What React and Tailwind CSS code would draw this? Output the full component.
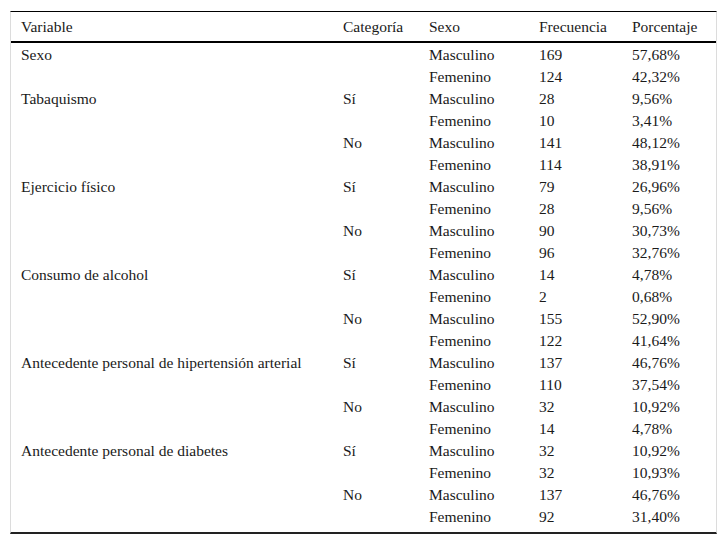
const rows = [
  ['Sexo', '', 'Masculino', '169', '57,68%'],
  ['', '', 'Femenino', '124', '42,32%'],
  ['Tabaquismo', 'Sí', 'Masculino', '28', '9,56%'],
  ['', '', 'Femenino', '10', '3,41%'],
  ['', 'No', 'Masculino', '141', '48,12%'],
  ['', '', 'Femenino', '114', '38,91%'],
  ['Ejercicio físico', 'Sí', 'Masculino', '79', '26,96%'],
  ['', '', 'Femenino', '28', '9,56%'],
  ['', 'No', 'Masculino', '90', '30,73%'],
  ['', '', 'Femenino', '96', '32,76%'],
  ['Consumo de alcohol', 'Sí', 'Masculino', '14', '4,78%'],
  ['', '', 'Femenino', '2', '0,68%'],
  ['', 'No', 'Masculino', '155', '52,90%'],
  ['', '', 'Femenino', '122', '41,64%'],
  ['Antecedente personal de hipertensión arterial', 'Sí', 'Masculino', '137', '46,76%'],
  ['', '', 'Femenino', '110', '37,54%'],
  ['', 'No', 'Masculino', '32', '10,92%'],
  ['', '', 'Femenino', '14', '4,78%'],
  ['Antecedente personal de diabetes', 'Sí', 'Masculino', '32', '10,92%'],
  ['', '', 'Femenino', '32', '10,93%'],
  ['', 'No', 'Masculino', '137', '46,76%'],
  ['', '', 'Femenino', '92', '31,40%'],
]

const headers = ['Variable', 'Categoría', 'Sexo', 'Frecuencia', 'Porcentaje']

const cols = 'grid grid-cols-[322px_86px_110px_93px_1fr]'

export default function App() {
  return (
    <div className="w-[726px] h-[545px] bg-white pt-[11px] pl-[10px] font-['Liberation_Serif'] text-[15.5px] text-[#1a1a1a]">
      <div className="w-[707px] border-t border-t-black border-b-2 border-b-[#222] border-x border-x-[#dcdcdc] pb-[5px]">
        {/* header */}
        <div className={`${cols} h-[31px] items-center border-b-2 border-b-black`}>
          {headers.map(h => (
            <div key={h} className="pl-[10px] whitespace-nowrap">{h}</div>
          ))}
        </div>

        {/* body */}
        {rows.map((r, i) => (
          <div key={i} className={`${cols} h-[22px] items-center`}>
            {r.map((c, j) => (
              <div key={j} className="pl-[10px] whitespace-nowrap">{c}</div>
            ))}
          </div>
        ))}
      </div>
    </div>
  )
}
